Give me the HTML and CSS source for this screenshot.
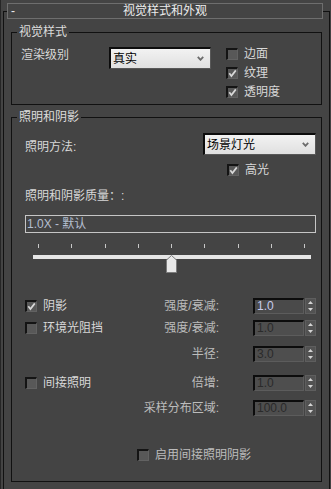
FILE: index.html
```html
<!DOCTYPE html>
<html lang="zh-CN">
  <head>
    <meta charset="UTF-8" />
    <title>视觉样式和外观</title>
    <link rel="stylesheet" href="styles.css">
  </head>
  <body>
    <div class="rollout">
      <div class="rollout-header">
        <span class="collapse">-</span>
        <span class="rollout-title">视觉样式和外观</span>
      </div>

      <div class="rollout-frame">
        <!-- Visual style -->
        <div class="group">
          <div class="group-title">视觉样式</div>
          <div class="style-body">
            <div class="style-label">渲染级别</div>
            <div class="dropdown dropdown-level">
              <span>真实</span>
              <svg class="chevron" width="7" height="5" viewBox="0 0 7 5"><path d="M0.8 0.8 L3.5 3.8 L6.2 0.8" fill="none" stroke="#6c6c6c" stroke-width="1.8"/></svg>
            </div>
            <div class="check-list">
              <div class="check"><span class="box"></span>边面</div>
              <div class="check"><span class="box"><svg width="9" height="9" viewBox="0 0 9 9"><path d="M1.3 4.3 L3.4 7 L7.8 1.4" fill="none" stroke="#d8d8d8" stroke-width="1.7"/></svg></span>纹理</div>
              <div class="check"><span class="box"><svg width="9" height="9" viewBox="0 0 9 9"><path d="M1.3 4.3 L3.4 7 L7.8 1.4" fill="none" stroke="#d8d8d8" stroke-width="1.7"/></svg></span>透明度</div>
            </div>
          </div>
        </div>

        <!-- Lighting and shadows -->
        <div class="group">
          <div class="group-title">照明和阴影</div>
          <div class="light-body">
            <div class="light-method">
              <span class="method-label">照明方法:</span>
              <div class="dropdown dropdown-method">
                <span>场景灯光</span>
                <svg class="chevron" width="7" height="5" viewBox="0 0 7 5"><path d="M0.8 0.8 L3.5 3.8 L6.2 0.8" fill="none" stroke="#6c6c6c" stroke-width="1.8"/></svg>
              </div>
            </div>

            <div class="check highlight"><span class="box"><svg width="9" height="9" viewBox="0 0 9 9"><path d="M1.3 4.3 L3.4 7 L7.8 1.4" fill="none" stroke="#d8d8d8" stroke-width="1.7"/></svg></span>高光</div>

            <div class="quality-label">照明和阴影质量：:</div>
            <div class="quality-field">1.0X - 默认</div>

            <div class="ticks">
              <span></span><span></span><span></span><span></span><span></span><span></span><span></span><span></span><span></span>
            </div>
            <div class="slider">
              <div class="slider-track"></div>
              <svg class="slider-thumb" width="11" height="18" viewBox="0 0 11 18"><path d="M5.5 0.5 L10.5 5 V17.5 H0.5 V5 Z" fill="#e9e9e9" stroke="#7c7c7c"/></svg>
            </div>

            <div class="spin-row row-shadow">
              <div class="spin-left">
                <div class="check"><span class="box"><svg width="9" height="9" viewBox="0 0 9 9"><path d="M1.3 4.3 L3.4 7 L7.8 1.4" fill="none" stroke="#d8d8d8" stroke-width="1.7"/></svg></span>阴影</div>
              </div>
              <span class="spin-label">强度/衰减:</span>
              <div class="spin-field">1.0</div>
              <div class="spin-buttons">
                <svg width="5" height="3" viewBox="0 0 5 3"><path d="M2.5 0 L5 3 H0 Z" fill="#d4d4d4"/></svg>
                <svg width="5" height="3" viewBox="0 0 5 3"><path d="M0 0 H5 L2.5 3 Z" fill="#d4d4d4"/></svg>
              </div>
            </div>

            <div class="spin-row row-ao">
              <div class="spin-left">
                <div class="check"><span class="box"></span>环境光阻挡</div>
              </div>
              <span class="spin-label">强度/衰减:</span>
              <div class="spin-field disabled">1.0</div>
              <div class="spin-buttons">
                <svg width="5" height="3" viewBox="0 0 5 3"><path d="M2.5 0 L5 3 H0 Z" fill="#d4d4d4"/></svg>
                <svg width="5" height="3" viewBox="0 0 5 3"><path d="M0 0 H5 L2.5 3 Z" fill="#d4d4d4"/></svg>
              </div>
            </div>

            <div class="spin-row row-radius">
              <div class="spin-left"></div>
              <span class="spin-label">半径:</span>
              <div class="spin-field disabled">3.0</div>
              <div class="spin-buttons">
                <svg width="5" height="3" viewBox="0 0 5 3"><path d="M2.5 0 L5 3 H0 Z" fill="#d4d4d4"/></svg>
                <svg width="5" height="3" viewBox="0 0 5 3"><path d="M0 0 H5 L2.5 3 Z" fill="#d4d4d4"/></svg>
              </div>
            </div>

            <div class="spin-row row-indirect">
              <div class="spin-left">
                <div class="check"><span class="box"></span>间接照明</div>
              </div>
              <span class="spin-label">倍增:</span>
              <div class="spin-field disabled">1.0</div>
              <div class="spin-buttons">
                <svg width="5" height="3" viewBox="0 0 5 3"><path d="M2.5 0 L5 3 H0 Z" fill="#d4d4d4"/></svg>
                <svg width="5" height="3" viewBox="0 0 5 3"><path d="M0 0 H5 L2.5 3 Z" fill="#d4d4d4"/></svg>
              </div>
            </div>

            <div class="spin-row row-sample">
              <div class="spin-left"></div>
              <span class="spin-label">采样分布区域:</span>
              <div class="spin-field disabled">100.0</div>
              <div class="spin-buttons">
                <svg width="5" height="3" viewBox="0 0 5 3"><path d="M2.5 0 L5 3 H0 Z" fill="#d4d4d4"/></svg>
                <svg width="5" height="3" viewBox="0 0 5 3"><path d="M0 0 H5 L2.5 3 Z" fill="#d4d4d4"/></svg>
              </div>
            </div>

            <div class="check shadow-enable"><span class="box"></span>启用间接照明阴影</div>
          </div>
        </div>
      </div>
    </div>
  </body>
</html>
```

FILE: styles.css
```css
body {
  margin: 0;
  background-color: #444444;
  font-family: "Liberation Sans", "Noto Sans CJK SC", sans-serif;
  font-size: 12px;
  line-height: 14px;
  color: #d8d8d8;
}
.rollout {
  height: 489px;
  box-sizing: border-box;
  padding-top: 3px;
  border-left: 1px solid #262626;
  overflow: hidden;
}
.rollout-header {
  position: relative;
  display: grid;
  grid-template-columns: 20px 1fr 20px;
  height: 14px;
  margin: 0 8px 0 6px;
  border: 1px solid #6e6e6e;
  background-color: #444444;
  color: #ececec;
}
.collapse {
  padding-left: 3px;
}
.rollout-title {
  text-align: center;
}
.rollout-frame {
  margin: -8px 1px 0 2px;
  padding: 20px 7px 7px;
  border: 1px solid #111111;
}
.group {
  border: 1px solid #111111;
}
.group + .group {
  margin-top: 12px;
}
.group-title {
  width: fit-content;
  margin: -8px 0 0 5px;
  padding: 0 2px;
  background-color: #444444;
  color: #dcdcdc;
}

/* visual style group */
.style-body {
  display: flex;
  align-items: flex-start;
  padding: 6px 0 6px 9px;
}
.style-label {
  width: 88px;
  margin-top: 3px;
}
.dropdown {
  display: flex;
  align-items: center;
  justify-content: space-between;
  box-sizing: border-box;
  height: 22px;
  padding: 0 6px 0 2px;
  border-style: solid;
  border-width: 2px 1px 1px 2px;
  border-color: #0c0c0c #585858 #585858 #0c0c0c;
  background: linear-gradient(#f2f2f2, #e0e0e0);
  color: #000000;
}
.dropdown-level {
  width: 102px;
  margin-top: 2px;
}
.check-list {
  display: flex;
  flex-direction: column;
  gap: 7px;
  margin: 3px 0 0 15px;
}
.check {
  display: flex;
  align-items: center;
  gap: 6px;
  height: 12px;
  white-space: nowrap;
}
.box {
  display: flex;
  align-items: center;
  justify-content: center;
  flex: none;
  box-sizing: border-box;
  width: 12px;
  height: 12px;
  border-style: solid;
  border-width: 2px 1px 1px 2px;
  border-color: #141414 #626262 #626262 #141414;
  background-color: #585858;
}

/* lighting group */
.light-body {
  padding: 0 5px 20px 13px;
}
.light-method {
  display: flex;
  align-items: flex-start;
  justify-content: space-between;
  margin-top: 9px;
}
.method-label {
  margin-top: 7px;
}
.dropdown-method {
  width: 113px;
}
.highlight {
  margin-top: 9px;
  padding-left: 202px;
}
.quality-label {
  margin-top: 13px;
}
.quality-field {
  box-sizing: border-box;
  height: 18px;
  margin-top: 12px;
  padding-left: 1px;
  border: 1px solid #c6c6c6;
  line-height: 16px;
  color: #b4bfd0;
}
.ticks {
  display: flex;
  justify-content: space-between;
  height: 4px;
  margin: 11px 11px 0 13px;
}
.ticks span {
  width: 1px;
  background-color: #c8c8c8;
}
.slider {
  position: relative;
  height: 18px;
  margin: 2px 5px 0 8px;
}
.slider-track {
  height: 4px;
  margin-top: 7px;
  background-color: #e6e6e6;
}
.slider-thumb {
  position: absolute;
  top: 0;
  left: 133px;
}
.spin-row {
  display: flex;
  align-items: center;
  height: 16px;
}
.row-shadow {
  margin-top: 25px;
}
.row-ao {
  margin-top: 6px;
}
.row-radius {
  margin-top: 10px;
}
.row-indirect {
  margin-top: 13px;
}
.row-sample {
  margin-top: 9px;
}
.spin-left {
  flex: 1;
}
.spin-label {
  color: #bcbcbc;
}
.spin-field {
  box-sizing: border-box;
  width: 51px;
  height: 16px;
  margin-left: 34px;
  padding-left: 2px;
  border-style: solid;
  border-width: 2px 1px 1px 2px;
  border-color: #0c0c0c #5c5c5c #5c5c5c #0c0c0c;
  background-color: #4a4a4a;
  line-height: 13px;
  color: #c8ccec;
}
.spin-field.disabled {
  color: #2a2a2a;
  background-color: #4e4e4e;
}
.spin-buttons {
  display: flex;
  flex-direction: column;
  align-items: center;
  justify-content: space-around;
  box-sizing: border-box;
  width: 11px;
  height: 16px;
  margin-left: 1px;
  border: 1px solid #5e5e5e;
  background-color: #525252;
}
.shadow-enable {
  margin-top: 33px;
  padding-left: 112px;
  color: #bcbcbc;
}
```
